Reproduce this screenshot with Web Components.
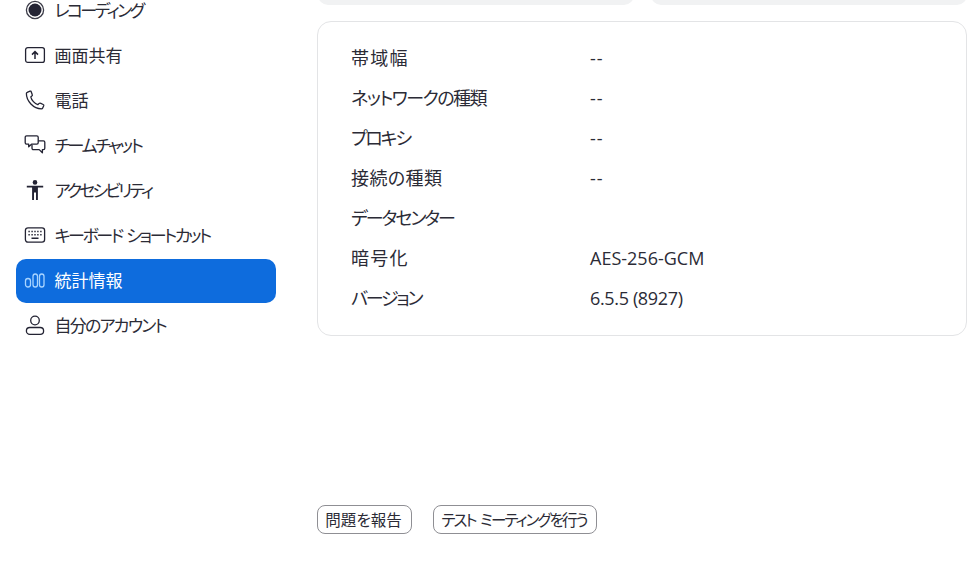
<!DOCTYPE html>
<html lang="ja">
<head>
<meta charset="utf-8">
<title>統計情報</title>
<style>
    html, body { margin: 0; height: 100%; overflow: hidden; background: #fff; }
    body {
        font-family: "Noto Sans CJK JP", "Noto Sans", sans-serif;
        color: #2b2b36;
    }
</style>
</head>
<body>
<settings-page>
    <side-nav slot="nav">
        <nav-item label="レコーディング" spacing="-2.6">
            <svg viewBox="0 0 22 22" width="22" height="22"><circle cx="11" cy="11" r="8.6" fill="none" stroke="#3c3c48" stroke-width="1.3"/><circle cx="11" cy="11" r="6.5" fill="#232333"/></svg>
        </nav-item>
        <nav-item label="画面共有" spacing="0">
            <svg viewBox="0 0 22 22" width="22" height="22" fill="none" stroke="#232333" stroke-width="1.3"><rect x="1.6" y="3.6" width="18.8" height="14.8" rx="2.2"/><path d="M11 15v-7M8 10.6 11 7.6l3 3" stroke-width="1.5"/></svg>
        </nav-item>
        <nav-item label="電話" spacing="0">
            <svg viewBox="0 0 22 22" width="22" height="22" fill="none" stroke="#232333" stroke-width="1.3" stroke-linejoin="round"><path d="M3.2 3.4 6 2.2c.5-.2 1 0 1.2.5l1.1 3c.2.4 0 .8-.3 1.1L6.8 7.9c.7 3.3 3.9 6.8 7 7.8l1.3-1.3c.4-.3.8-.4 1.2-.2l2.9 1.3c.5.2.7.7.5 1.2l-1 2.3c-.2.5-.7.8-1.3.8C9.5 19.7 2.3 12 2.4 4.6c0-.5.3-1 .8-1.2Z"/></svg>
        </nav-item>
        <nav-item label="チームチャット" spacing="-2.35">
            <svg viewBox="0 0 22 22" width="22" height="22" fill="none" stroke="#232333" stroke-width="1.3" stroke-linejoin="round"><path d="M2.6 1.8h10.2c.8 0 1.4.6 1.4 1.4v5.6c0 .8-.6 1.4-1.4 1.4H7.5L4.7 12.8v-2.6H2.6c-.8 0-1.4-.6-1.4-1.4V3.2c0-.8.6-1.4 1.4-1.4Z"/><path d="M14.2 6.8h5.200c.8 0 1.400.6 1.400 1.400v6c0 .8-.6 1.400-1.400 1.400h-1v3.200l-3.200-3.200H9.400c-.8 0-1.400-.6-1.400-1.400v-3.500"/></svg>
        </nav-item>
        <nav-item label="アクセシビリティ" spacing="-2.8">
            <svg viewBox="0 0 22 22" width="22" height="22" fill="#232333"><circle cx="11" cy="3.4" r="2.3"/><path d="M2.8 6.8h16.400v1.800h-5.300V21h-1.900v-7.400h-2V21H8.100V8.600H2.800Z"/></svg>
        </nav-item>
        <nav-item label="キーボード ショートカット" spacing="-2.4" gap="3">
            <svg viewBox="0 0 22 22" width="22" height="22" fill="none" stroke="#232333" stroke-width="1.3"><rect x="1.4" y="3.8" width="19.200" height="14.400" rx="2.600"/><path d="M4.400 7.500h1.400M7.400 7.500h1.400M10.300 7.500h1.400M13.200 7.500h1.400M16.200 7.500h1.400M4.400 10.700h1.400M7.400 10.700h1.400M10.300 10.700h1.400M13.200 10.700h1.400M16.200 10.700h1.400M7.500 14.300h7" stroke-width="1.500"/></svg>
        </nav-item>
        <nav-item label="統計情報" spacing="0" active>
            <svg viewBox="0 0 22 22" width="22" height="22" fill="none" stroke="#a8d4ff" stroke-width="1.3"><rect x="1.500" y="8.500" width="5" height="8.500" rx="2.500"/><rect x="9" y="4" width="4.500" height="13" rx="2.250"/><rect x="15.500" y="4" width="4.500" height="13" rx="2.250"/></svg>
        </nav-item>
        <nav-item label="自分のアカウント" spacing="-1.75">
            <svg viewBox="0 0 22 22" width="22" height="22" fill="none" stroke="#232333" stroke-width="1.3"><circle cx="11" cy="6.500" r="4.300"/><rect x="2.400" y="13.500" width="17.200" height="6.800" rx="3.400"/></svg>
        </nav-item>
    </side-nav>

    <stat-tile slot="tiles"></stat-tile>
    <stat-tile slot="tiles"></stat-tile>

    <info-card slot="card">
        <info-row label="帯域幅" spacing="1.2" value="--" value-spacing="1"></info-row>
        <info-row label="ネットワークの種類" spacing="-1.5" value="--" value-spacing="1"></info-row>
        <info-row label="プロキシ" spacing="-2.2" value="--" value-spacing="1"></info-row>
        <info-row label="接続の種類" spacing=".4" value="--" value-spacing="1"></info-row>
        <info-row label="データセンター" spacing="-2" value=""></info-row>
        <info-row label="暗号化" spacing="1.2" value="AES-256-GCM"></info-row>
        <info-row label="バージョン" spacing="-2.2" value="6.5.5 (8927)" value-spacing="-.35"></info-row>
    </info-card>

    <plain-button slot="actions" width="95">問題を報告</plain-button>
    <plain-button slot="actions" width="164" spacing="-1.9" gap="3">テスト ミーティングを行う</plain-button>
</settings-page>

<script>
class settingsPage extends HTMLElement {
    constructor(){
        super()
        this.shadowDOM = this.attachShadow({mode : 'open'})
        this.shadowDOM.innerHTML = `
        <style>
            :host {
                display: flex;
                height: 100vh;
            }
            .side {
                width: 317px;
                flex: none;
                box-sizing: border-box;
                padding-left: 16px;
                margin-top: -12px;
            }
            .main {
                flex: 1;
                display: flex;
                flex-direction: column;
                margin-top: -36px;
                padding: 0 10px 39px 0;
                min-width: 0;
            }
            .tiles {
                display: flex;
                gap: 17px;
                margin-left: 1px;
                margin-bottom: 16px;
            }
            .actions {
                margin-top: auto;
                display: flex;
                gap: 21px;
            }
        </style>
        <div class="side"><slot name="nav"></slot></div>
        <div class="main">
            <div class="tiles"><slot name="tiles"></slot></div>
            <slot name="card"></slot>
            <div class="actions"><slot name="actions"></slot></div>
        </div>
        `
    }
}

class sideNav extends HTMLElement {
    constructor(){
        super()
        this.shadowDOM = this.attachShadow({mode : 'open'})
        this.shadowDOM.innerHTML = `
        <style>
            :host {
                display: flex;
                flex-direction: column;
                gap: 1px;
                width: 260px;
            }
        </style>
        <slot></slot>
        `
    }
}

class navItem extends HTMLElement {
    constructor(){
        super()
        this.shadowDOM = this.attachShadow({mode : 'open'})
    }

    connectedCallback(){
        this.shadowDOM.innerHTML = `
        <style>
            :host {
                display: flex;
                align-items: center;
                gap: 8.5px;
                height: 44px;
                padding-left: 8px;
                border-radius: 10px;
                font-size: 17px;
                color: #2b2b36;
            }
            :host([active]) {
                margin: 1px 0 -1px;
                background: #0e6cdd;
                color: #fff;
            }
            :host([active]) .label {
                padding-bottom: 2px;
            }
            .icon {
                display: flex;
                width: 22px;
                height: 22px;
            }
            .label {
                line-height: 18px;
                white-space: pre;
                font-feature-settings: "palt";
            }
        </style>
        <span class="icon"><slot></slot></span>
        <span class="label" style="letter-spacing:${this.getAttribute('spacing') || 0}px;word-spacing:${this.getAttribute('gap') || 0}px">${this.getAttribute('label')}</span>
        `
    }
}

class statTile extends HTMLElement {
    constructor(){
        super()
        this.shadowDOM = this.attachShadow({mode : 'open'})
        this.shadowDOM.innerHTML = `
        <style>
            :host {
                display: block;
                flex: 1;
                height: 41px;
                background: #f1f2f3;
                border-radius: 0 0 10px 10px;
            }
        </style>
        `
    }
}

class infoCard extends HTMLElement {
    constructor(){
        super()
        this.shadowDOM = this.attachShadow({mode : 'open'})
        this.shadowDOM.innerHTML = `
        <style>
            :host {
                display: block;
                box-sizing: border-box;
                height: 315px;
                padding: 16px 33px;
                border: 1px solid #e3e4e6;
                border-radius: 14px;
            }
        </style>
        <slot></slot>
        `
    }
}

class infoRow extends HTMLElement {
    constructor(){
        super()
        this.shadowDOM = this.attachShadow({mode : 'open'})
    }

    connectedCallback(){
        this.shadowDOM.innerHTML = `
        <style>
            :host {
                display: flex;
                align-items: center;
                height: 40px;
                font-size: 18px;
                color: #2b2b36;
            }
            .label {
                width: 239px;
                flex: none;
                padding-bottom: 2px;
                font-feature-settings: "palt";
            }
            .value {
                padding-bottom: 1px;
                font-family: "Open Sans", "Noto Sans", sans-serif;
            }
        </style>
        <span class="label" style="letter-spacing:${this.getAttribute('spacing') || 0}px">${this.getAttribute('label')}</span>
        <span class="value" style="letter-spacing:${this.getAttribute('value-spacing') || 0}px">${this.getAttribute('value')}</span>
        `
    }
}

class plainButton extends HTMLElement {
    constructor(){
        super()
        this.shadowDOM = this.attachShadow({mode : 'open'})
    }

    connectedCallback(){
        this.shadowDOM.innerHTML = `
        <style>
            :host {
                display: flex;
                align-items: center;
                justify-content: center;
                box-sizing: border-box;
                height: 29px;
                width: ${this.getAttribute('width')}px;
                padding: 0 2px 2px 0;
                border: 1px solid #8f8f94;
                border-radius: 8px;
                font-size: 15.5px;
                color: #2b2b36;
            }
            span {
                white-space: pre;
                letter-spacing: ${this.getAttribute('spacing') || 0}px;
                word-spacing: ${this.getAttribute('gap') || 0}px;
                font-feature-settings: "palt";
            }
        </style>
        <span><slot></slot></span>
        `
    }
}

customElements.define('settings-page', settingsPage)
customElements.define('side-nav', sideNav)
customElements.define('nav-item', navItem)
customElements.define('stat-tile', statTile)
customElements.define('info-card', infoCard)
customElements.define('info-row', infoRow)
customElements.define('plain-button', plainButton)
</script>
</body>
</html>
